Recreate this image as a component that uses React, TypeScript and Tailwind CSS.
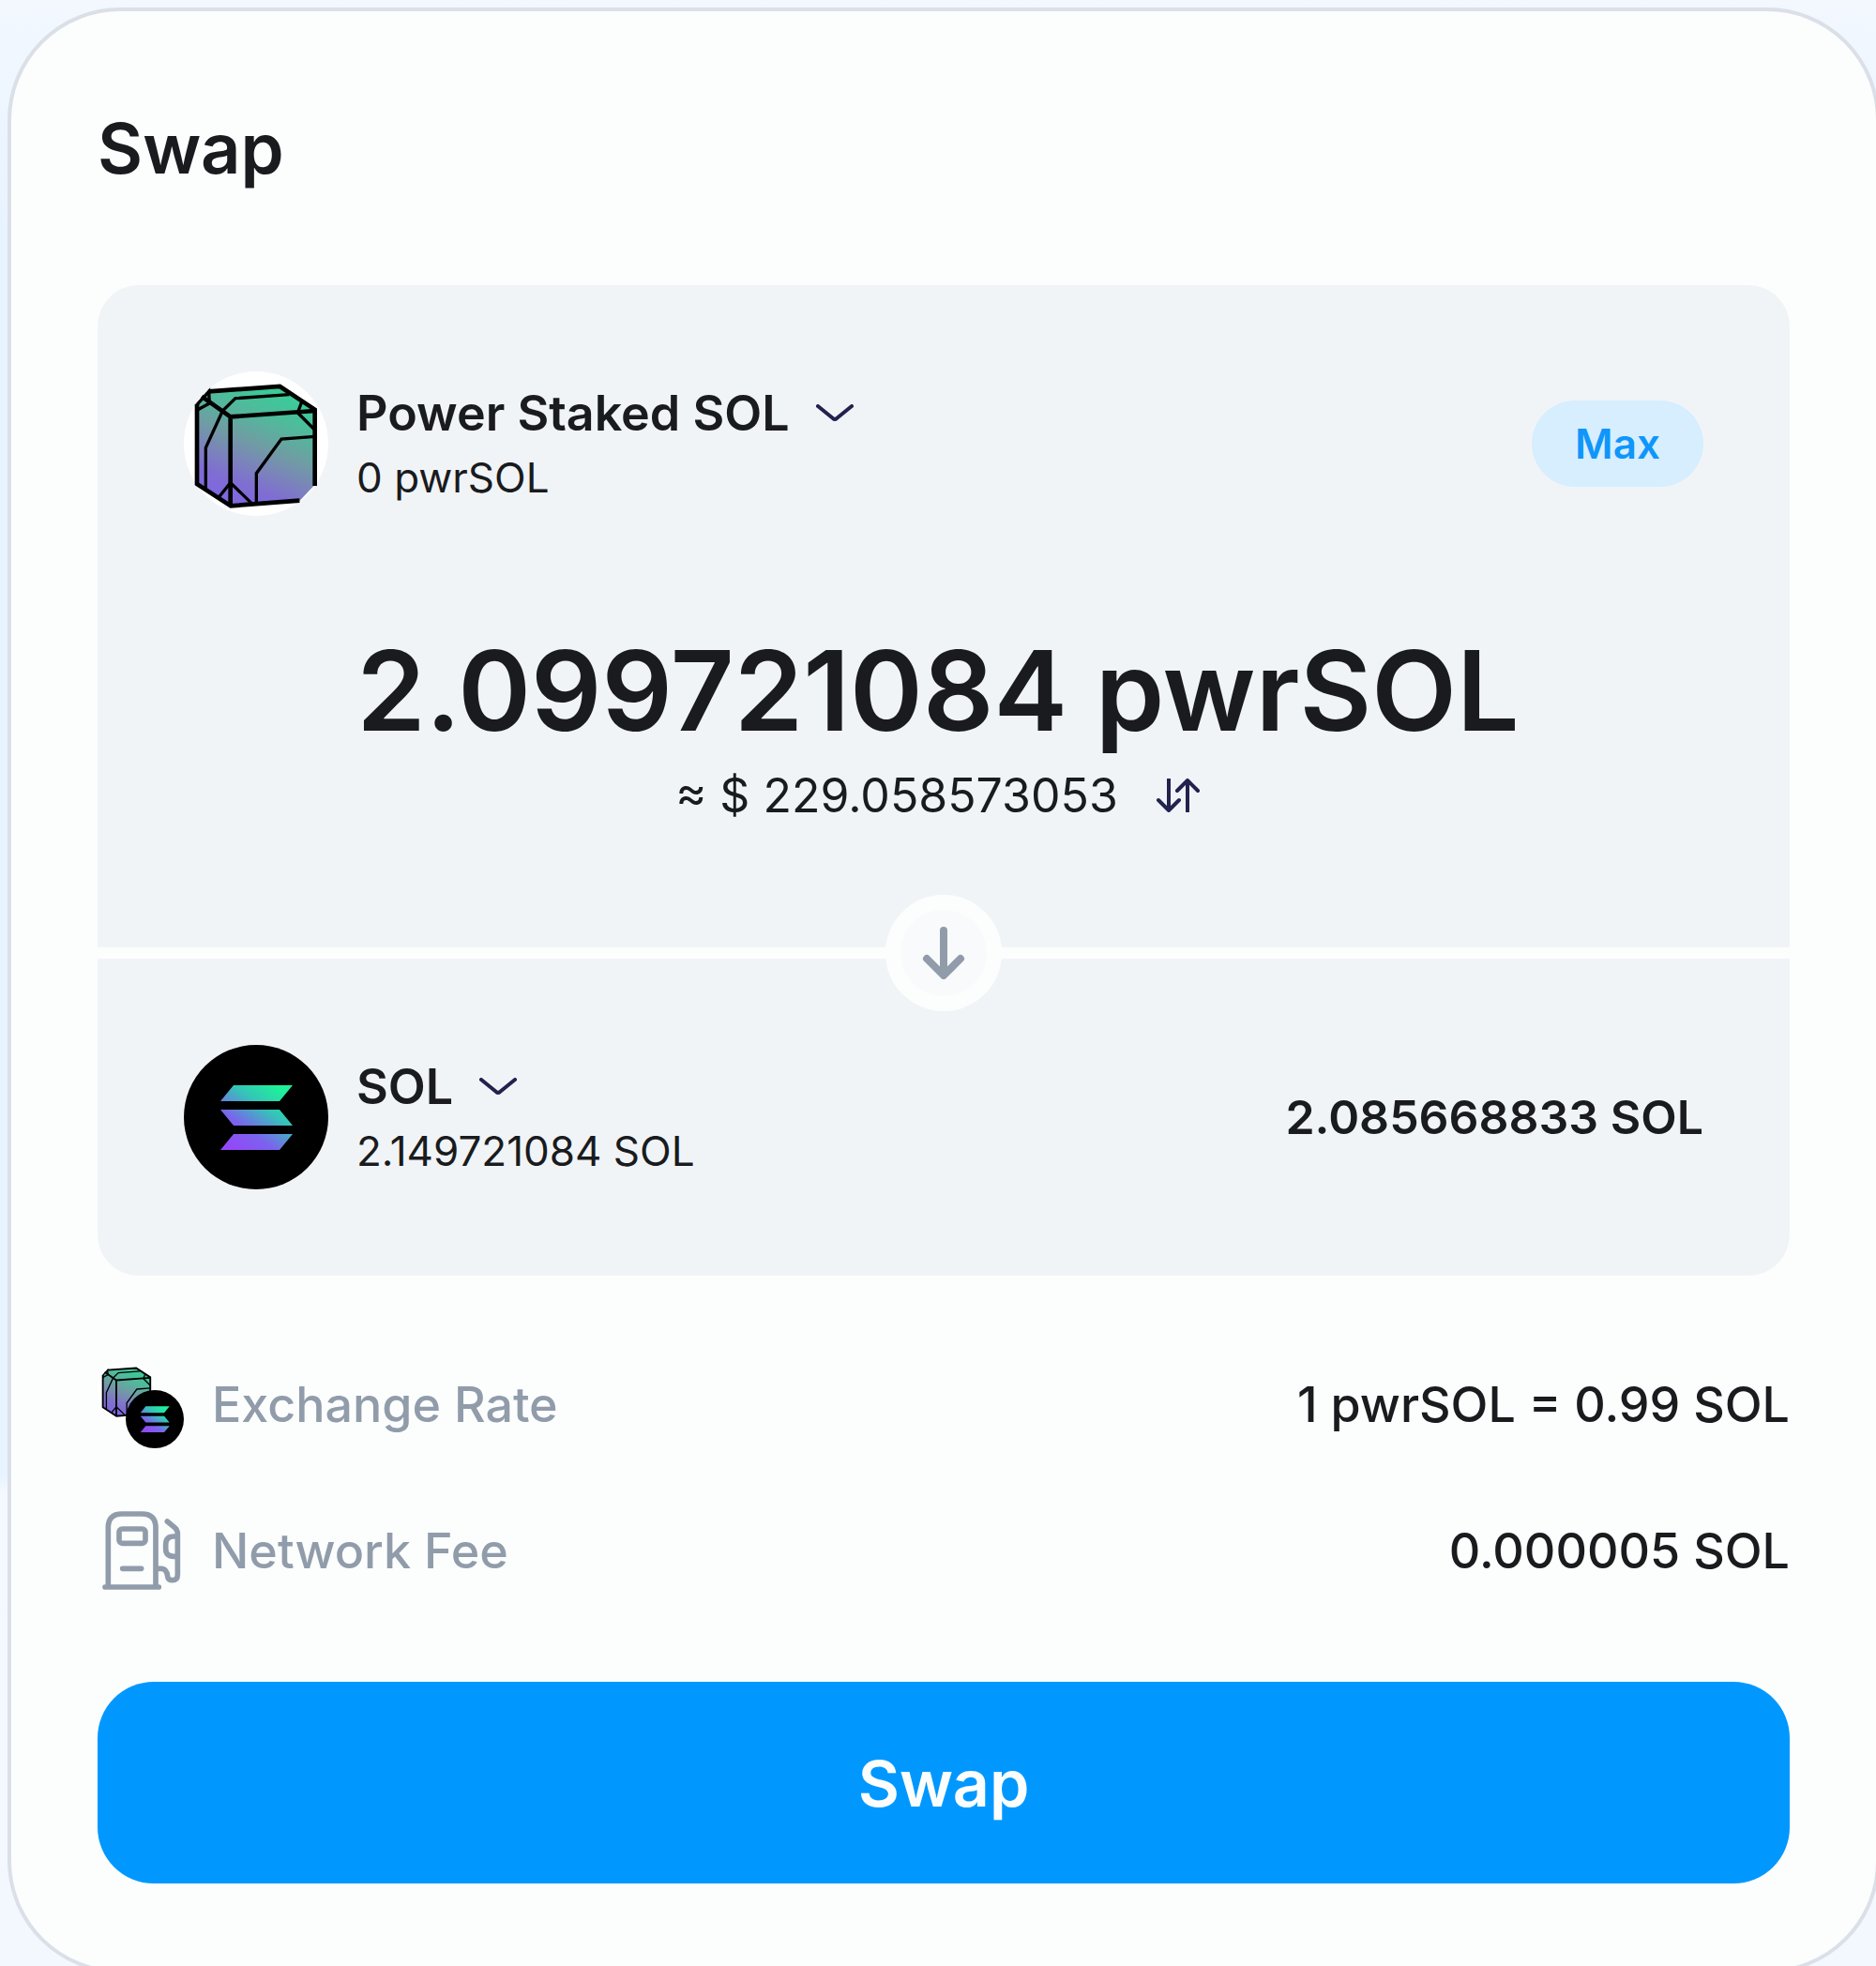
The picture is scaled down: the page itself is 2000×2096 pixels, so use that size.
import { useId } from "react";

type IconProps = { className?: string };

function PowerSolIcon({ className }: IconProps) {
  const id = useId();
  return (
    <svg className={className} viewBox="48 46 462 462" fill="none" aria-hidden="true">
      <defs>
        <linearGradient id={id} x1="365" y1="120" x2="225" y2="460" gradientUnits="userSpaceOnUse">
          <stop offset="0" stopColor="#3acb98" />
          <stop offset="0.22" stopColor="#4fbb9b" />
          <stop offset="0.48" stopColor="#6f9da3" />
          <stop offset="0.68" stopColor="#7b83bb" />
          <stop offset="0.85" stopColor="#7f6ed2" />
          <stop offset="1" stopColor="#8068de" />
        </linearGradient>
      </defs>
      <circle cx="279" cy="277" r="231" fill="#fff" />
      <path d="M128 108 355 92l115 76v237l-52 55-218 18-112-72V155Z" fill={`url(#${id})`} />
      <path d="M90 150v256l108 70 220-17M467 412V168L355 94 126 110" stroke="#000" strokeWidth="14" />
      <path d="m105 126 92 65 271-19M197 191v287" stroke="#000" strokeWidth="14" />
      <path
        d="M90 152l38-42 2 38-40 22M118 424V290l54-118 41-40 172-12M424 146l-12 32 54 54M160 448l37-46 68 66M280 468v-96l80-110 108-8"
        stroke="#000"
        strokeWidth="10"
      />
    </svg>
  );
}

function SolIcon({ className }: IconProps) {
  const id = useId();
  return (
    <svg className={className} viewBox="0 0 154 154" aria-hidden="true">
      <defs>
        <linearGradient id={id} x1="48" y1="120" x2="106" y2="38" gradientUnits="userSpaceOnUse">
          <stop offset="0.1" stopColor="#9348f8" />
          <stop offset="0.35" stopColor="#7c62ee" />
          <stop offset="0.65" stopColor="#35c4b8" />
          <stop offset="0.9" stopColor="#1ff09a" />
        </linearGradient>
      </defs>
      <circle cx="77" cy="77" r="77" />
      <path d="M53 43h63l-14 17H39ZM39 69h63l14 17H53ZM53 95h63l-14 17H39Z" fill={`url(#${id})`} />
    </svg>
  );
}

function Chevron() {
  return (
    <svg className="h-5 w-10" viewBox="0 0 40 20" fill="none" aria-hidden="true">
      <path d="m2 2 16 13q2 2 4 0L38 2" stroke="#22224f" strokeWidth="4" strokeLinecap="round" strokeLinejoin="round" />
    </svg>
  );
}

function SwitchIcon() {
  return (
    <svg className="h-9 w-12" viewBox="-2 0 48 36" fill="none" aria-hidden="true">
      <path
        d="M12 1v33M1 23l11 11 11-11M32 35V2M21 13 32 2l11 11"
        stroke="#22224f"
        strokeWidth="4"
        strokeLinecap="round"
        strokeLinejoin="round"
      />
    </svg>
  );
}

function ArrowDown() {
  return (
    <svg className="h-14 w-12" viewBox="0 0 48 56" fill="none" aria-hidden="true">
      <path
        d="M24 4v47M6 34l18 18 18-18"
        stroke="#919cab"
        strokeWidth="8"
        strokeLinecap="round"
        strokeLinejoin="round"
      />
    </svg>
  );
}

function FuelIcon() {
  return (
    <svg className="size-[92px]" viewBox="42 504 276 276" fill="none" aria-hidden="true">
      <g stroke="#919cab" strokeWidth="17" strokeLinecap="round" strokeLinejoin="round">
        <path d="M76 752V566q0-44 44-44h64q44 0 44 44v186M66 756h172" />
        <rect x="111" y="570" width="84" height="46" rx="10" />
        <path d="M122 697h60M265 546l24 20q9 8 9 20v130q0 18-17 18-13 0-15-12-3-25-20-25h-12M298 594h-12q-26 0-26 26v14q0 24 26 24h12" />
      </g>
    </svg>
  );
}

function Token({ icon, name, balance }: { icon: React.ReactNode; name: string; balance: string }) {
  return (
    <div className="flex items-center gap-[30px]">
      {icon}
      <div>
        <button type="button" aria-haspopup="listbox" className="flex items-center gap-7 text-[52px] leading-[72px] font-semibold">
          {name}
          <Chevron />
        </button>
        <p className="text-[44px] leading-[64px]">{balance}</p>
      </div>
    </div>
  );
}

function Detail({ icon, label, value }: { icon: React.ReactNode; label: string; value: string }) {
  return (
    <div className="flex items-center justify-between text-[52px] leading-[92px] font-medium">
      <dt className="flex items-center gap-[30px] text-[#919cab]">
        {icon}
        {label}
      </dt>
      <dd>{value}</dd>
    </div>
  );
}

export default function App() {
  return (
    <div className="h-screen overflow-hidden bg-[linear-gradient(180deg,#f3f8ff_0%,#e7f3ff_12%,#e7f3ff_75%,#f4f9ff_76%,#f3f8ff_100%)] pt-2 pl-2 font-['Inter',sans-serif] text-[#191b1e]">
      <main className="-mr-1 rounded-[120px] border-4 border-[#dbe0e8] bg-[#fcfefd] p-[92px]">
        <h1 className="text-[74px] leading-[108px] font-semibold">Swap</h1>

        <div className="mt-[92px] flex flex-col gap-3">
          <section className="rounded-t-[44px] bg-[#f1f4f7] px-[92px] pt-[92px] pb-[124px]">
            <div className="flex items-center justify-between">
              <Token icon={<PowerSolIcon className="size-[154px]" />} name="Power Staked SOL" balance="0 pwrSOL" />
              <button type="button" className="rounded-full bg-[#d6eefe] px-[46px] text-[44px] leading-[92px] font-semibold text-[#0f96fb]">
                Max
              </button>
            </div>
            <input
              type="text"
              aria-label="Amount to swap"
              defaultValue="2.099721084 pwrSOL"
              className="mt-28 block h-[148px] w-full bg-transparent pr-3 text-center text-[118px] font-semibold outline-none"
            />
            <div className="flex items-center justify-center gap-10 pr-3 text-[50px] leading-[76px]">
              <span>≈ $ 229.058573053</span>
              <button type="button" aria-label="Switch currency">
                <SwitchIcon />
              </button>
            </div>
          </section>

          <section className="relative flex items-center justify-between rounded-b-[44px] bg-[#f1f4f7] p-[92px]">
            <button
              type="button"
              aria-label="Reverse direction"
              className="absolute -top-[68px] left-1/2 flex size-[124px] -translate-x-1/2 items-center justify-center rounded-full border-16 border-[#fcfefd] bg-[#f9fafc]"
            >
              <ArrowDown />
            </button>
            <Token icon={<SolIcon className="size-[154px]" />} name="SOL" balance="2.149721084 SOL" />
            <p className="text-[50px] leading-[72px] font-semibold">2.085668833 SOL</p>
          </section>
        </div>

        <dl className="mt-[92px] flex flex-col gap-16">
          <Detail
            icon={
              <span className="relative block size-[92px]">
                <PowerSolIcon className="size-[62px]" />
                <SolIcon className="absolute right-0 bottom-0 size-[62px]" />
              </span>
            }
            label="Exchange Rate"
            value="1 pwrSOL = 0.99 SOL"
          />
          <Detail icon={<FuelIcon />} label="Network Fee" value="0.000005 SOL" />
        </dl>

        <button type="button" className="mt-[93px] h-[215px] w-full rounded-[60px] bg-[#0098ff] text-[68px] font-semibold text-[#fcfefd]">
          Swap
        </button>
      </main>
    </div>
  );
}
